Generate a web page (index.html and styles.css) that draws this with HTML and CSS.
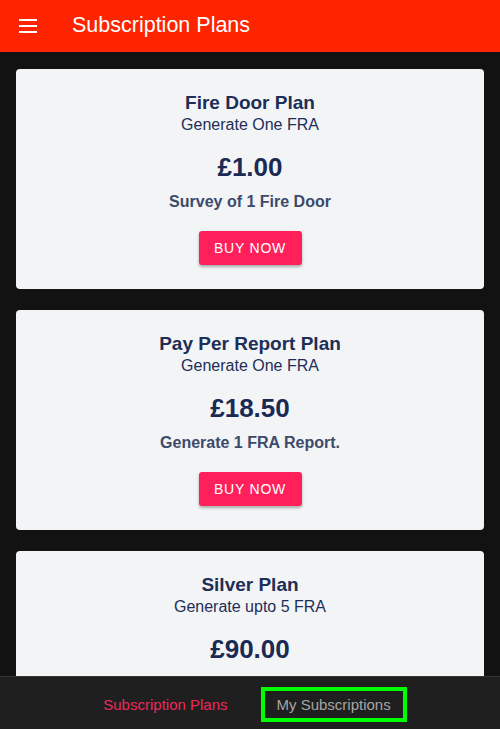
FILE: index.html
```html
<!DOCTYPE html>
<html>
<head>
<meta charset="utf-8">
<link rel="stylesheet" href="styles.css">
</head>
<body>
<div class="app">
  <header class="topbar">
    <svg class="menu" width="18" height="14" viewBox="0 0 18 14"><rect x="0" y="0" width="18" height="2" fill="#fff"/><rect x="0" y="6" width="18" height="2" fill="#fff"/><rect x="0" y="12" width="18" height="2" fill="#fff"/></svg>
    <h1 class="title">Subscription Plans</h1>
  </header>
  <main class="content">
    <section class="card">
      <h2 class="plan-name">Fire Door Plan</h2>
      <p class="plan-sub">Generate One FRA</p>
      <p class="price">£1.00</p>
      <p class="desc">Survey of 1 Fire Door</p>
      <button class="buy">BUY NOW</button>
    </section>
    <section class="card">
      <h2 class="plan-name">Pay Per Report Plan</h2>
      <p class="plan-sub">Generate One FRA</p>
      <p class="price">£18.50</p>
      <p class="desc">Generate 1 FRA Report.</p>
      <button class="buy">BUY NOW</button>
    </section>
    <section class="card">
      <h2 class="plan-name">Silver Plan</h2>
      <p class="plan-sub">Generate upto 5 FRA</p>
      <p class="price">£90.00</p>
      <p class="desc">Generate 5 FRA Reports.</p>
      <button class="buy">BUY NOW</button>
    </section>
  </main>
  <nav class="tabs">
    <span class="tab active">Subscription Plans</span>
    <span class="tab focused">My Subscriptions</span>
  </nav>
</div>
</body>
</html>
```
FILE: styles.css
```css
* { box-sizing: border-box; }
html, body { margin: 0; padding: 0; height: 100%; }
body { font-family: "Liberation Sans", Arial, sans-serif; background: #121212; }
.app { display: flex; flex-direction: column; height: 100vh; }
.topbar {
  height: 52px; flex: none; background: #ff2400;
  display: flex; align-items: center; padding-left: 19px;
}
.menu { display: block; margin-top: -1px; }
.title { margin: -2px 0 0 35px; color: #fff; font-size: 21.5px; font-weight: normal; }
.content {
  flex: 1; overflow: hidden; padding: 17px 16px 0;
  display: flex; flex-direction: column; gap: 21px;
}
.card {
  flex: none; background: #f3f4f6; border-radius: 4px;
  padding: 22px 16px 24px; text-align: center;
  display: flex; flex-direction: column; align-items: center;
}
.plan-name { margin: 0; font-size: 19px; line-height: 23px; color: #1d2e57; font-weight: bold; }
.plan-sub { margin: 0; font-size: 16px; line-height: 22px; color: #1d2e57; }
.price { margin: 15px 0 0; font-size: 26px; line-height: 32px; font-weight: bold; color: #1b2a52; }
.desc { margin: 9px 0 0; font-size: 16px; line-height: 20px; font-weight: bold; color: #3c4a6b; }
.buy {
  margin-top: 19px; height: 34px; width: 103px; border: none; border-radius: 3px;
  background: #ff1f5a; color: #fff; font-family: inherit; font-size: 14px;
  letter-spacing: 0.8px; box-shadow: 0 2px 3px rgba(0,0,0,0.3);
}
.tabs {
  height: 53px; flex: none; background: #1f1f1f; border-top: 1px solid #333;
  display: flex; justify-content: center; align-items: center; gap: 17px; padding-right: 6px;
}
.tab { font-size: 15px; line-height: 19px; padding: 4px 12px; border: 4px solid transparent; margin-top: 3px; white-space: nowrap; }
.tab.active { color: #f0285a; }
.tab.focused { color: #a6a6a6; border-color: #00ff00; }
```
